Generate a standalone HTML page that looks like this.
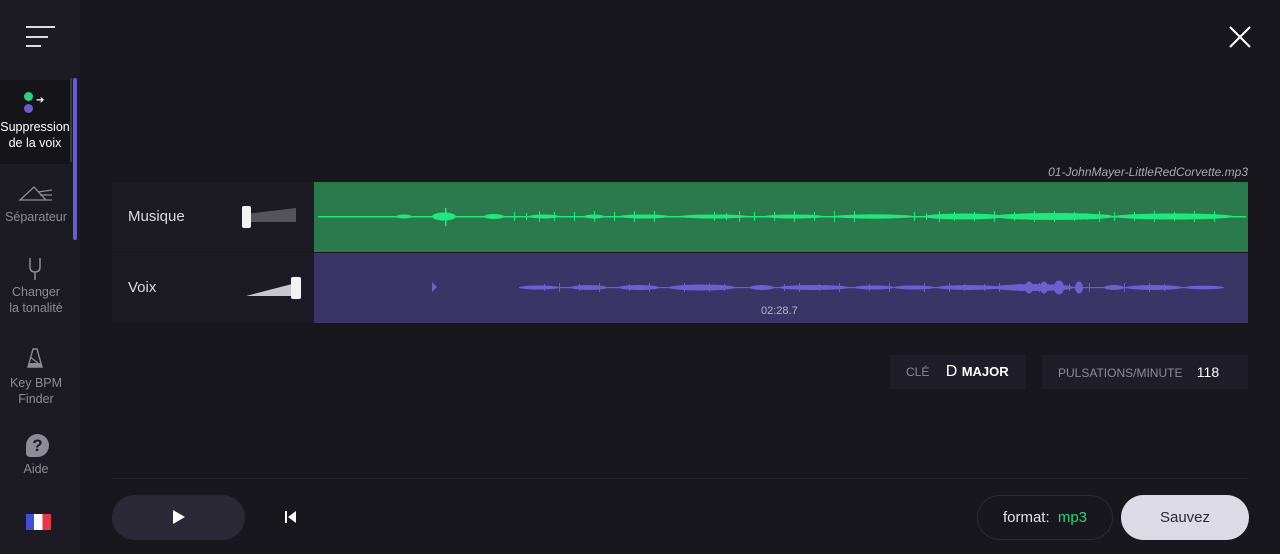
<!DOCTYPE html>
<html><head><meta charset="utf-8"><style>
*{margin:0;padding:0;box-sizing:border-box}
body{width:1280px;height:554px;background:#17171d;font-family:"Liberation Sans",sans-serif;overflow:hidden;position:relative;color:#fff}
.side{position:absolute;left:0;top:0;width:80px;height:554px;background:#1c1b24}
.item{position:absolute;left:0;width:72px;text-align:center;font-size:12.5px;line-height:16px;color:#8c8b96}
.abs{position:absolute}
.lbl{position:absolute;left:112px;width:202px;height:70px;background:#1c1b24;font-size:15px;color:#dcdbe6;padding-left:16px}
.pill{position:absolute;background:#1f1e28;height:34px;font-size:12px;color:#8c8b96;line-height:34px}
</style></head><body>
<div class="side">
  <div class="abs" style="left:26px;top:26px;width:29px;height:2px;background:#ddd"></div>
  <div class="abs" style="left:26px;top:36px;width:22px;height:2px;background:#ddd"></div>
  <div class="abs" style="left:26px;top:45px;width:15px;height:2px;background:#ddd"></div>
  <div class="abs" style="left:0;top:80px;width:70px;height:84px;background:#141419"></div>
  <div class="abs" style="left:70px;top:78px;width:2px;height:84px;background:#3b3a48"></div>
  <div class="abs" style="left:73px;top:78px;width:4px;height:162px;background:#6a5ccc;border-radius:2px"></div>
  <div class="abs" style="left:24px;top:92px;width:9px;height:9px;border-radius:50%;background:#2bd47a"></div>
  <div class="abs" style="left:24px;top:104px;width:9px;height:9px;border-radius:50%;background:#6a5ccc"></div>
  <div class="abs" style="left:36px;top:95px;font-size:10px;color:#fff">➔</div>
  <div class="item" style="top:119px;color:#fff;width:70px">Suppression<br>de la voix</div>
  <svg class="abs" style="left:18px;top:184px" width="36" height="20" viewBox="0 0 36 20"><path d="M2 16 L16 3 L28 16 Z M2 16 L34 16 M20 8 L34 6 M22 11 L34 11" stroke="#8c8b96" fill="none" stroke-width="1.3"/></svg>
  <div class="item" style="top:209px">Séparateur</div>
  <svg class="abs" style="left:27px;top:257px" width="16" height="24" viewBox="0 0 16 24"><path d="M3 1 V10 Q3 15 8 15 Q13 15 13 10 V1 M8 15 V23" stroke="#8c8b96" fill="none" stroke-width="1.5"/></svg>
  <div class="item" style="top:284px">Changer<br>la tonalité</div>
  <svg class="abs" style="left:26px;top:347px" width="18" height="22" viewBox="0 0 18 22"><path d="M7 2 L11 2 L16 20 L2 20 Z M4 10 L12 16" stroke="#8c8b96" fill="none" stroke-width="1.4"/><path d="M3 16 L15 16 L16 20 L2 20Z" fill="#8c8b96"/></svg>
  <div class="item" style="top:375px">Key BPM<br>Finder</div>
  <div class="abs" style="left:26px;top:434px;width:23px;height:23px;border-radius:50% 50% 50% 4px;background:#8c8b96;color:#1c1b24;font-weight:bold;font-size:17px;text-align:center;line-height:23px">?</div>
  <div class="item" style="top:461px">Aide</div>
  <div class="abs" style="left:26px;top:514px;width:25px;height:16px;background:linear-gradient(90deg,#3e4fd8 33%,#fff 33%,#fff 66%,#e8364a 66%)"></div>
</div>
<svg class="abs" style="left:1229px;top:26px" width="22" height="22"><path d="M1 1 L21 21 M21 1 L1 21" stroke="#fff" stroke-width="2"/></svg>
<div class="abs" style="right:32px;top:165px;font-size:12px;color:#a9a8b3;font-style:italic">01-JohnMayer-LittleRedCorvette.mp3</div>
<div class="lbl" style="top:182px;line-height:70px">Musique</div>
<div class="lbl" style="top:253px;line-height:70px">Voix</div>
<svg class="abs" style="left:240px;top:200px" width="62" height="32"><path d="M6 14 L56 8 L56 22 L6 22Z" fill="#55545c"/><rect x="2" y="6" width="9" height="22" rx="2" fill="#f2f2f5"/></svg>
<svg class="abs" style="left:244px;top:274px" width="62" height="32"><path d="M2 22 L52 9 L52 22Z" fill="#c8c7ce"/><rect x="47" y="3" width="10" height="22" rx="2" fill="#f2f2f5"/></svg>
<div class="abs" style="left:314px;top:182px;width:934px;height:70px;background:#2a7a4b"></div>
<div class="abs" style="left:314px;top:253px;width:934px;height:70px;background:#3a3566"></div>
<svg class="abs" style="left:314px;top:182px" width="934" height="141">
<g fill="#1ee87e"><rect x="4" y="34" width="928" height="1.5"/>
<ellipse cx="90" cy="34.5" rx="8" ry="2"/><ellipse cx="130" cy="34.5" rx="12" ry="4"/><ellipse cx="180" cy="34.5" rx="10" ry="2.5"/><ellipse cx="230" cy="34.5" rx="15" ry="2"/><ellipse cx="280" cy="34.5" rx="10" ry="2"/><ellipse cx="330" cy="34.5" rx="25" ry="2"/><ellipse cx="400" cy="34.5" rx="35" ry="2"/><ellipse cx="480" cy="34.5" rx="30" ry="2"/><ellipse cx="560" cy="34.5" rx="40" ry="2.2"/><ellipse cx="650" cy="34.5" rx="40" ry="3"/><ellipse cx="740" cy="34.5" rx="60" ry="3.5"/><ellipse cx="860" cy="34.5" rx="60" ry="3"/><rect x="131" y="26" width="1.5" height="18"/>
<g id="sp"><rect x="600" y="30" width="1" height="9"/><rect x="612" y="31" width="1" height="7"/><rect x="625" y="29" width="1" height="11"/><rect x="640" y="30" width="1" height="9"/><rect x="660" y="30" width="1" height="9"/><rect x="680" y="29" width="1" height="11"/><rect x="700" y="30" width="1" height="9"/><rect x="720" y="29" width="1" height="11"/><rect x="740" y="29" width="1" height="11"/></g>
<use href="#sp" x="160"/><use href="#sp" x="-200"/><use href="#sp" x="-400"/></g>
<g fill="#6e5fd0"><path d="M118 100 L123 105 L118 110Z"/><rect x="205" y="105" width="700" height="1.2"/>
<ellipse cx="225" cy="105.5" rx="20" ry="2"/><ellipse cx="275" cy="105.5" rx="18" ry="2.5"/><ellipse cx="325" cy="105.5" rx="20" ry="2.5"/><ellipse cx="388" cy="105.5" rx="33" ry="3"/><ellipse cx="448" cy="105.5" rx="12" ry="2.5"/><ellipse cx="500" cy="105.5" rx="35" ry="2.5"/><ellipse cx="560" cy="105.5" rx="20" ry="2"/><ellipse cx="600" cy="105.5" rx="20" ry="2"/><ellipse cx="655" cy="105.5" rx="32" ry="2.5"/><ellipse cx="720" cy="105.5" rx="40" ry="3.5"/><ellipse cx="745" cy="105.5" rx="5" ry="7"/><ellipse cx="715" cy="105.5" rx="4" ry="6"/><ellipse cx="730" cy="105.5" rx="4" ry="6"/><ellipse cx="765" cy="105.5" rx="4" ry="6"/><ellipse cx="800" cy="105.5" rx="10" ry="2.5"/><ellipse cx="840" cy="105.5" rx="28" ry="2.5"/><ellipse cx="890" cy="105.5" rx="20" ry="1.8"/>
<g id="vp"><rect x="230" y="102" width="1" height="7"/><rect x="245" y="101" width="1" height="9"/><rect x="265" y="102" width="1" height="7"/><rect x="285" y="101" width="1" height="9"/><rect x="315" y="102" width="1" height="7"/><rect x="335" y="101" width="1" height="9"/><rect x="370" y="101" width="1" height="9"/><rect x="395" y="101" width="1" height="9"/><rect x="410" y="102" width="1" height="7"/></g>
<use href="#vp" x="240"/><use href="#vp" x="440"/></g>
</svg>
<div class="abs" style="left:761px;top:305px;font-size:11px;color:#b7b6c6">02:28.7</div>
<div class="pill" style="left:890px;width:136px;top:355px;padding-left:16px">CLÉ <span style="color:#fff;font-size:16px;margin-left:13px">D <b style="font-size:13px">MAJOR</b></span></div>
<div class="pill" style="left:1042px;width:206px;top:355px;padding-left:16px">PULSATIONS/MINUTE <span style="color:#fff;font-size:14px;margin-left:11px">118</span></div>
<div class="abs" style="left:112px;top:478px;width:1136px;height:1px;background:#24232c"></div>
<div class="abs" style="left:112px;top:495px;width:133px;height:45px;border-radius:23px;background:#2a2935"></div>
<svg class="abs" style="left:172px;top:509px" width="14" height="16"><path d="M1 1 L13 8 L1 15Z" fill="#fff"/></svg>
<svg class="abs" style="left:284px;top:511px" width="14" height="12"><rect x="1" y="0" width="2" height="12" fill="#fff"/><path d="M12 0 L4 6 L12 12Z" fill="#fff"/></svg>
<div class="abs" style="left:977px;top:495px;width:136px;height:45px;border-radius:23px;border:1px solid #2c2b36;text-align:center;line-height:43px;font-size:15px;color:#e3e2ea">format: <span style="color:#2bd47a;margin-left:4px">mp3</span></div>
<div class="abs" style="left:1121px;top:495px;width:128px;height:45px;border-radius:23px;background:#dcdbe5;text-align:center;line-height:45px;font-size:15px;color:#2a2935">Sauvez</div>
</body></html>
